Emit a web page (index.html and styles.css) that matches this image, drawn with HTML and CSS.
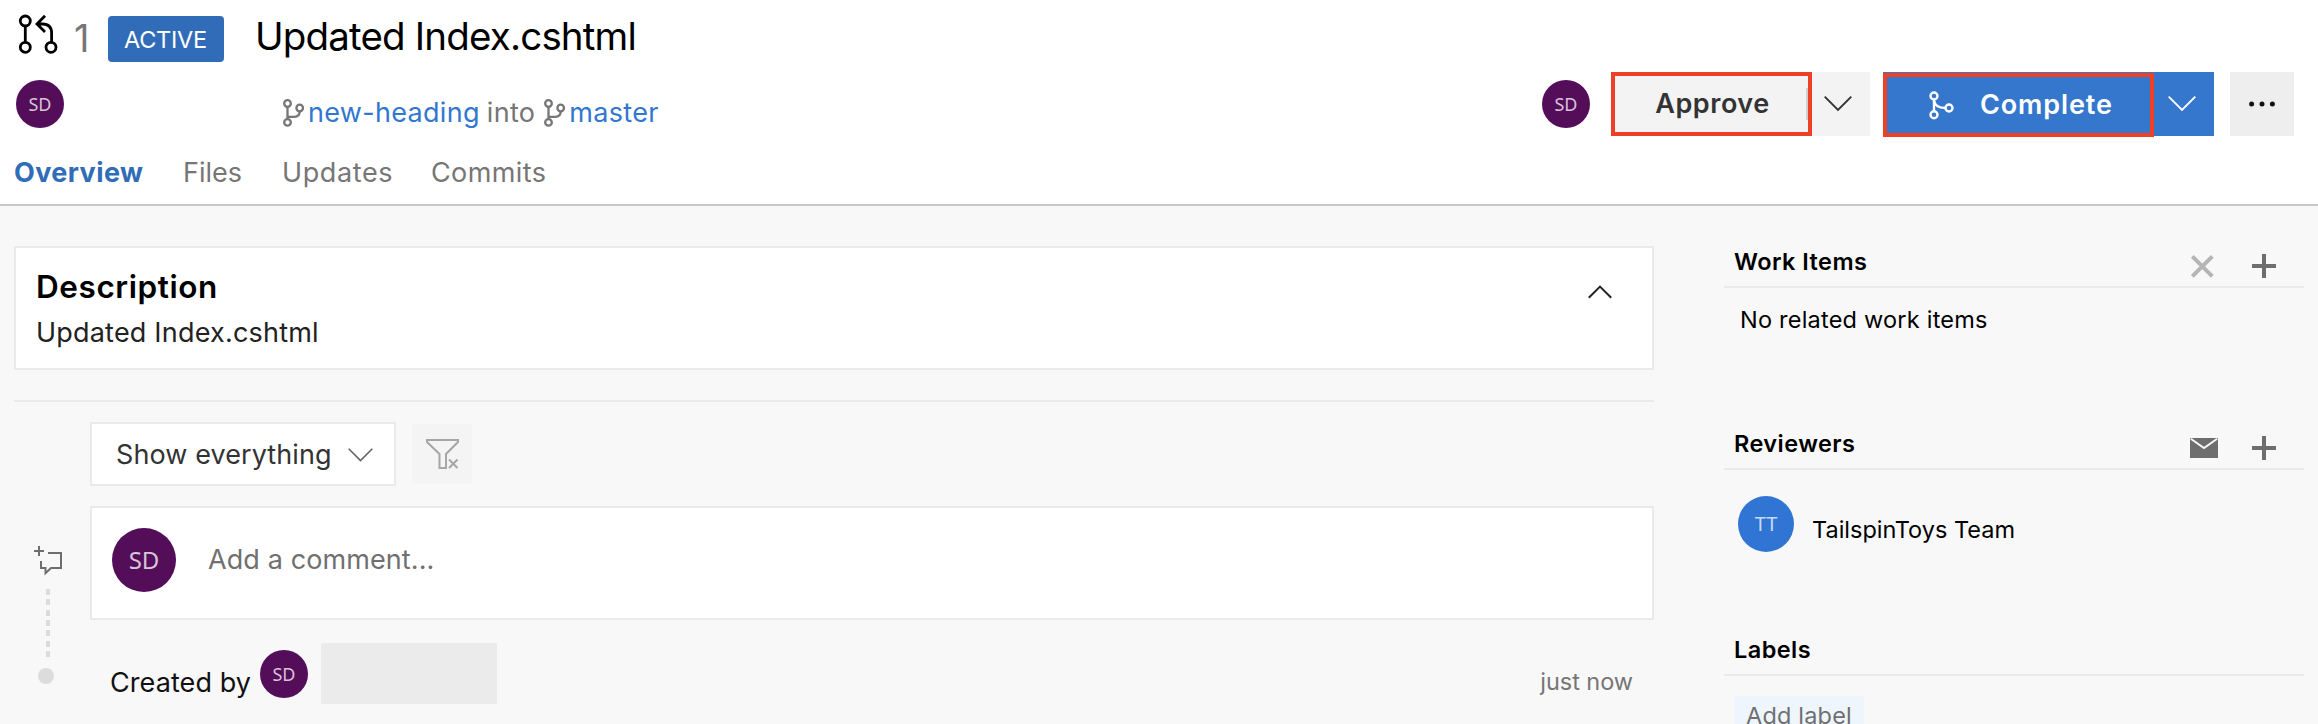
FILE: index.html
```
<!DOCTYPE html>
<html lang="en">
<head>
<meta charset="utf-8">
<title>Updated Index.cshtml</title>
<link rel="stylesheet" href="styles.css">
</head>
<body>
<header class="header">
  <div class="title-row">
    <svg class="pr-icon" width="34" height="44" viewBox="0 0 34 44" fill="none" stroke="#000" stroke-width="2.8"><circle cx="7.3" cy="9" r="5"/><circle cx="7.3" cy="35.3" r="5"/><circle cx="33" cy="35.3" r="5"/><path d="M7.3 14v16.3M33.6 30.5V21q0-9-9-9h-5.5M27 3.8 19 12l8 8"/></svg>
    <span class="pr-number">1</span>
    <span class="badge">ACTIVE</span>
    <h1 class="title">Updated Index.cshtml</h1>
  </div>
  <div class="action-row">
    <span class="avatar">SD</span>
    <div class="branches">
      <svg class="branch-icon" width="22" height="28" viewBox="0 0 22 28"><g fill="none" stroke="#767676" stroke-width="2.3"><circle cx="4.5" cy="4.5" r="3.3"/><circle cx="4.5" cy="23.4" r="3.3"/><circle cx="16.7" cy="9" r="3.3"/><path d="M4.5 7.800V20M16.700 12.300q0 5.500-5.200 5.500H4.500"/></g></svg><a class="branch-link source">new-heading</a><span class="into">into</span><svg class="branch-icon" width="22" height="28" viewBox="0 0 22 28"><g fill="none" stroke="#767676" stroke-width="2.3"><circle cx="4.5" cy="4.5" r="3.3"/><circle cx="4.5" cy="23.4" r="3.3"/><circle cx="16.7" cy="9" r="3.3"/><path d="M4.5 7.800V20M16.700 12.300q0 5.500-5.200 5.500H4.500"/></g></svg><a class="branch-link target">master</a>
    </div>
    <div class="actions">
      <span class="avatar">SD</span>
      <button class="btn approve">Approve</button>
      <button class="btn approve-menu"><svg width="28" height="16" viewBox="0 0 28 16" fill="none" stroke="#333" stroke-width="1.9"><path d="m.7.700 13.300 13.300L27.300.7"/></svg></button>
      <button class="btn complete"><svg class="merge-icon" width="26" height="30" viewBox="0 0 26 30" fill="none" stroke="#fff" stroke-width="2.400"><circle cx="5" cy="5" r="3.500"/><circle cx="5" cy="23.700" r="3.500"/><circle cx="20" cy="17" r="3.500"/><path d="M5 8.500v11.700M5 9c.5 5.500 5 8 11.500 8"/></svg><span>Complete</span></button>
      <button class="btn complete-menu"><svg width="28" height="16" viewBox="0 0 28 16" fill="none" stroke="#fff" stroke-width="1.9"><path d="m.7.700 13.300 13.300L27.300.7"/></svg></button>
      <button class="btn more"><svg width="26" height="6" viewBox="0 0 26 6" fill="#111"><circle cx="2.600" cy="3" r="2.500"/><circle cx="13" cy="3" r="2.500"/><circle cx="23.400" cy="3" r="2.500"/></svg></button>
    </div>
  </div>
  <nav class="tabs">
    <a class="tab selected">Overview</a>
    <a class="tab files">Files</a>
    <a class="tab updates">Updates</a>
    <a class="tab commits">Commits</a>
  </nav>
</header>
<div class="body">
  <main class="main">
    <section class="description">
      <div>
        <h2 class="description-title">Description</h2>
        <p class="description-text">Updated Index.cshtml</p>
      </div>
      <svg class="collapse" width="24" height="14" viewBox="0 0 24 14" fill="none" stroke="#222" stroke-width="2"><path d="M.8 12.800 12 1.600l11.200 11.200"/></svg>
    </section>
    <div class="filters">
      <div class="dropdown"><span>Show everything</span><svg width="25" height="14" viewBox="0 0 25 14" fill="none" stroke="#666" stroke-width="1.600"><path d="m.7.800 11.800 11.800L24.300.8"/></svg></div>
      <button class="clear-filter"><svg width="34" height="32" viewBox="0 0 34 32" fill="none" stroke="#a6a6a6" stroke-width="2"><path d="M1 1h31v2L20 15v14h-6.500V15L1 3zM23 20.500l8.500 8.500M31.500 20.500 23 29"/></svg></button>
    </div>
    <div class="timeline">
      <div class="rail">
        <svg class="comment-icon" width="30" height="30" viewBox="0 0 30 30" fill="none" stroke="#6e6e6e" stroke-width="2"><path d="M5 0v10M0 5h10M14 7h13v15H17l-5.500 5.200V22H7v-7"/></svg>
        <div class="dashes"></div>
        <div class="dot"></div>
      </div>
      <div class="feed">
        <div class="comment-box"><span class="avatar large">SD</span><span class="placeholder">Add a comment...</span></div>
        <div class="event">
          <span class="created">Created by</span>
          <span class="avatar">SD</span>
          <span class="redacted"></span>
          <span class="time">just now</span>
        </div>
      </div>
    </div>
  </main>
  <aside class="sidebar">
    <section class="panel work-items">
      <div class="panel-head"><h3>Work Items</h3><svg class="first-icon" width="28" height="24" viewBox="0 0 28 24" fill="none" stroke="#b5b5b5" stroke-width="4"><path d="m2.300 2.300 20 20M22.300 2.300l-20 20"/></svg><svg width="24" height="24" viewBox="0 0 24 24" fill="none" stroke="#6e6e6e" stroke-width="4"><path d="M12 0v24M0 12h24"/></svg></div>
      <p class="empty">No related work items</p>
    </section>
    <section class="panel reviewers">
      <div class="panel-head"><h3>Reviewers</h3><svg class="first-icon" width="28" height="24" viewBox="0 0 28 24"><path d="M0 2h28v20H0z" fill="#6e6e6e"/><path d="m.8 2.800 13.200 9.200L27.200 2.800" fill="none" stroke="#f8f8f8" stroke-width="2"/></svg><svg width="24" height="24" viewBox="0 0 24 24" fill="none" stroke="#6e6e6e" stroke-width="4"><path d="M12 0v24M0 12h24"/></svg></div>
      <div class="reviewer"><span class="avatar team">TT</span><span class="reviewer-name">TailspinToys Team</span></div>
    </section>
    <section class="panel">
      <div class="panel-head"><h3>Labels</h3></div>
      <span class="add-label">Add label</span>
    </section>
  </aside>
</div>
</body>
</html>
```
FILE: styles.css
```
* { box-sizing: border-box; }
body { margin: 0; height: 724px; overflow: hidden; background: #f8f8f8; color: #000; font: 27px/36px Inter, "Liberation Sans", sans-serif; }
h1, h2, h3, p { margin: 0; }
svg { display: block; flex: none; overflow: visible; }
span, a, h1, h3 { white-space: nowrap; }

.header { height: 206px; background: #fff; border-bottom: 2px solid #c8c8c8; }
.title-row { display: flex; align-items: flex-start; height: 72px; padding-left: 18px; }
.pr-icon { margin-top: 12px; }
.pr-number { width: 34px; margin: 2px 0 0 22px; font-size: 38px; line-height: 72px; color: #767676; }
.badge { width: 116px; height: 46px; margin-top: 16px; padding-left: 16px; border-radius: 4px; background: #316cb8; color: #fff; font-size: 23.5px; line-height: 47px; letter-spacing: -.25px; }
.title { margin-left: 31px; font-size: 38.5px; font-weight: 400; line-height: 72px; letter-spacing: -.83px; }

.action-row { display: flex; align-items: center; height: 64px; padding: 0 24px 0 16px; }
.avatar { display: flex; flex: none; align-items: center; justify-content: center; width: 48px; height: 48px; border-radius: 50%; background: #540d59; color: #d6c4d8; font: 18px/24px "Noto Sans", sans-serif; }
.avatar.large { width: 64px; height: 64px; font-size: 24px; }
.avatar.team { width: 56px; height: 56px; background: #3075d3; color: #c5dcf6; font-size: 20px; }
.branches { display: flex; align-items: center; margin-left: 219px; padding-top: 17px; color: #767676; letter-spacing: .31px; }
.branch-icon { margin-right: 3px; }
.branch-link { color: #3277cf; }
.into { margin: 0 9px 0 7px; }
.actions { display: flex; align-items: center; margin-left: auto; }
.btn { display: flex; align-items: center; justify-content: center; height: 64px; padding: 0; border: 0; border-radius: 0; background: #f3f3f3; color: #333; font: 600 27px/36px Inter, sans-serif; }
.approve { width: 201px; margin-left: 21px; padding-left: 2px; border: 4px solid #ee4027; letter-spacing: .54px; background: linear-gradient(#cfcfcf, #cfcfcf) right center / 2px 32px no-repeat #f3f3f3; }
.approve-menu { width: 58px; padding-right: 7px; }
.complete { position: relative; top: 1px; width: 271px; margin-left: 13px; padding-left: 42px; justify-content: flex-start; border: 4px solid #ee4027; background: #3477cd; color: #fff; letter-spacing: .89px; box-shadow: 0 -1px #3477cd; }
.merge-icon { margin: 1px 25px 0 0; }
.complete-menu { width: 60px; padding-right: 4px; background: #3477cd; }
.more { width: 64px; margin-left: 16px; background: #eee; }

.tabs { display: flex; height: 68px; padding: 5px 0 0 14px; line-height: 64px; color: #767676; }
.tab { flex: none; }
.selected { width: 169px; color: #316cb8; font-weight: 700; letter-spacing: .4px; }
.files { width: 99px; }
.updates { width: 149px; letter-spacing: .6px; }
.commits { letter-spacing: .4px; }

.body { display: grid; grid-template-columns: 1640px 580px; column-gap: 70px; padding: 40px 14px 0; height: 518px; overflow: hidden; }
.description { display: flex; justify-content: space-between; height: 124px; padding: 20px 40px 0 20px; border: 2px solid #eaeaea; background: #fff; }
.description-title { font-size: 31.5px; font-weight: 600; line-height: 38px; letter-spacing: .57px; }
.description-text { margin-top: 9px; line-height: 36px; color: #222; letter-spacing: .2px; }
.collapse { margin-top: 17px; }
.filters { display: flex; align-items: center; height: 106px; margin-top: 30px; padding-left: 76px; border-top: 2px solid #eaeaea; }
.dropdown { display: flex; align-items: center; justify-content: space-between; width: 306px; height: 64px; padding: 1px 21px 0 24px; border: 2px solid #eaeaea; background: #fff; color: #333; letter-spacing: .09px; }
.clear-filter { display: flex; align-items: center; justify-content: center; width: 60px; height: 60px; margin-left: 16px; padding: 1px 0 0 2px; border: 0; background: #f4f4f4; }
.timeline { display: grid; grid-template-columns: 76px 1fr; }
.rail { padding-top: 40px; }
.comment-icon { margin-left: 20px; }
.dashes { width: 4px; height: 68px; margin: 13px 0 0 32px; background: repeating-linear-gradient(#dcdcdc 0 6px, #f8f8f8 6px 10.300px); }
.dot { width: 16px; height: 16px; margin: 11px 0 0 24px; border-radius: 50%; background: #dcdcdc; }
.comment-box { display: flex; align-items: flex-start; height: 114px; padding: 20px; border: 2px solid #eaeaea; background: #fff; }
.placeholder { margin: 14px 0 0 32px; color: #707070; letter-spacing: .1px; }
.event { display: flex; align-items: flex-start; padding: 23px 21px 0 20px; }
.created { width: 150px; margin-top: 22px; color: #111; letter-spacing: .08px; }
.event .avatar { margin-top: 7px; }
.redacted { width: 176px; height: 61px; margin-left: 13px; background: #ebebeb; }
.time { margin: 21px 0 0 auto; color: #767676; font-size: 23.5px; letter-spacing: -.05px; }

.sidebar { font-size: 23.5px; }
.panel-head { display: flex; align-items: flex-start; height: 42px; padding: 0 28px 0 10px; border-bottom: 2px solid #eaeaea; }
.panel-head h3 { margin: -2px auto 0 0; font-size: 23.5px; font-weight: 600; line-height: 36px; letter-spacing: .44px; }
.panel-head svg { margin-top: 8px; }
.panel-head .first-icon { margin-right: 34px; }
.work-items { height: 182px; }
.reviewers { height: 206px; }
.empty { padding: 14px 0 0 16px; letter-spacing: .22px; }
.reviewer { display: flex; padding: 26px 0 0 14px; }
.reviewer-name { margin: 16px 0 0 18px; letter-spacing: 0; }
.add-label { display: block; width: 130px; height: 28px; margin: 20px 0 0 10px; padding-left: 12px; background: #eff5fd; color: #707070; line-height: 39px; letter-spacing: .18px; }
```
